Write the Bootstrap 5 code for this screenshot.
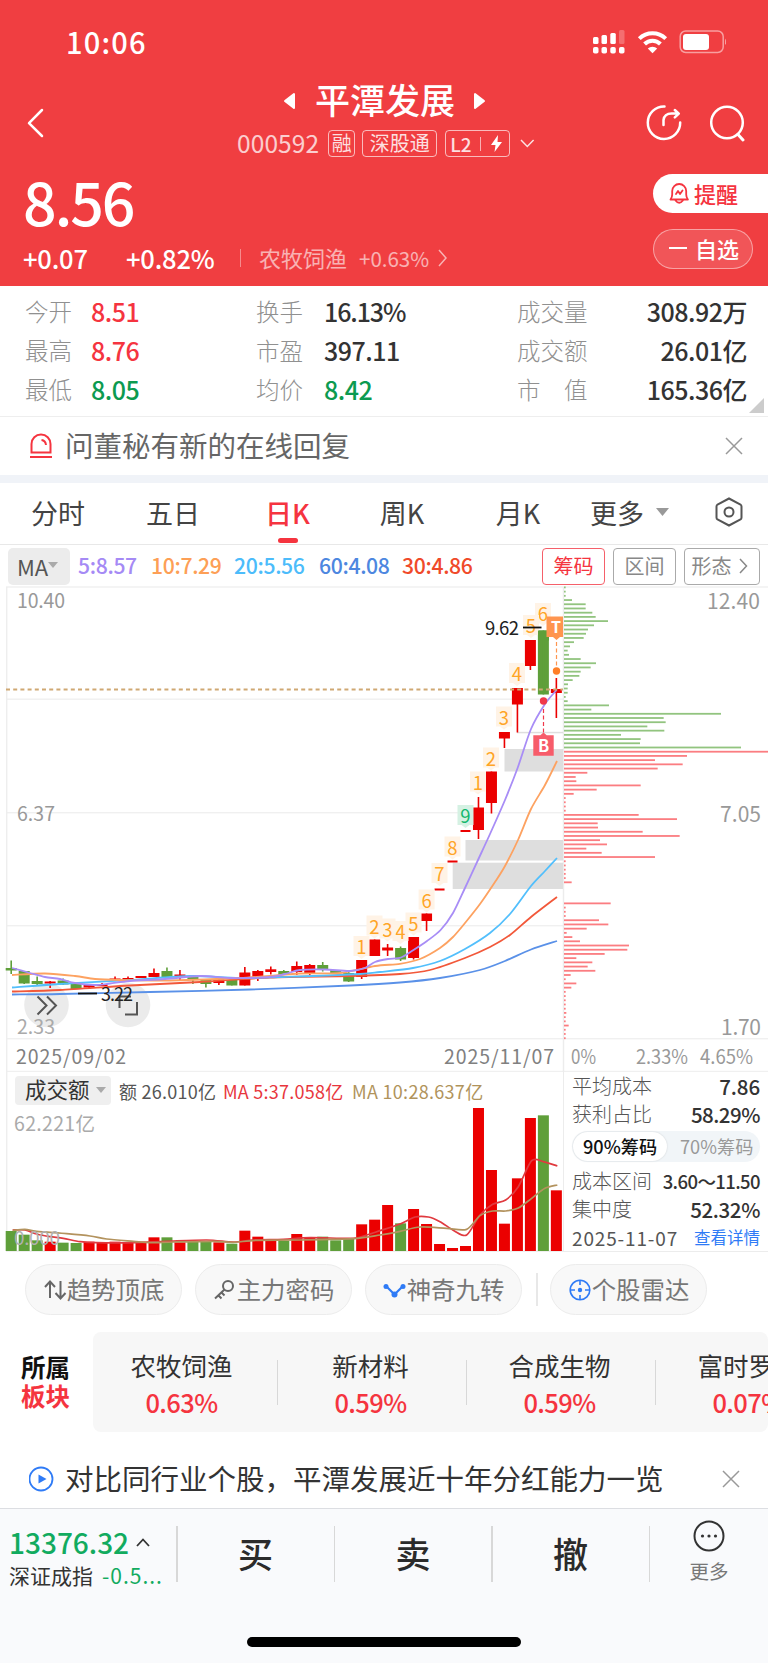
<!DOCTYPE html>
<html lang="zh-CN">
<head>
<meta charset="utf-8">
<meta name="viewport" content="width=device-width, initial-scale=1">
<title>平潭发展 000592</title>
<link href="https://cdn.jsdelivr.net/npm/bootstrap@5.3.0/dist/css/bootstrap.min.css" rel="stylesheet">
<style>
:root{--up:#f5343f;--down:#0c9a50;--head:#f03e41}
body{font-family:"Noto Sans CJK SC",sans-serif;width:768px;margin:0;background:#fff;color:#333;line-height:1;white-space:nowrap;overflow-x:hidden}
svg{display:block;flex:none}
.hd{background:var(--head);color:#fff;height:286px}
.status{height:84px;padding:0 42px 1px 66px}
.clock{font-size:29px;font-weight:500;letter-spacing:1.2px}
.titles{height:84px}
.side-l{width:237px;padding-left:26px;height:78px}
.stock-name{font-size:35px;font-weight:500;line-height:36px;margin:0 18px 0 19px;padding-bottom:3px}
.code{font-size:24.5px;opacity:.75;letter-spacing:.1px}
.tag{border:1.3px solid rgba(255,255,255,.65);border-radius:4px;height:27px;font-size:20px;line-height:24px;color:rgba(255,255,255,.85)}
.price{font-size:59px;font-weight:500;line-height:60px;letter-spacing:-2px}
.chg{font-size:25.5px;font-weight:500;letter-spacing:-.2px}
.pill-w{height:39px;border-radius:20px 0 0 20px;background:#fff;color:var(--up);width:115px;font-size:22px;font-weight:500;padding:0 0 2px 14px}
.pill-o{height:40px;border-radius:20px;border:1px solid rgba(255,255,255,.45);background:rgba(255,255,255,.12);width:100px;font-size:22px;font-weight:500;margin-right:15px;padding:0 0 2px 15px}
.facts{height:131px;padding:6px 21px 0 25px;border-bottom:1.5px solid #eee;position:relative}
.facts .line{height:39px}
.k{font-size:23.5px;color:#909090;font-weight:300}
.v{font-size:25px;font-weight:500;color:#333;letter-spacing:-.5px}
.up{color:var(--up)!important}.down{color:var(--down)!important}
.corner{position:absolute;right:4px;bottom:3px}
.msg{height:58px;padding:0 25px 0 29px;font-size:28.5px;color:#666}
.msg span{padding-bottom:2px}
.gapband{height:8px;background:#f0f3f8}
.tabs{height:62px;border-bottom:1.5px solid #e8e8e8;font-size:27px;color:#444}
.tabs>div{position:relative;height:61px;padding-bottom:3px}
.tabs .on::after{content:"";position:absolute;left:50%;margin-left:-10px;bottom:1px;width:20px;height:5px;border-radius:3px;background:var(--up)}
.ma{height:41px;padding:2px 8px 0;font-size:21.2px;font-weight:500}
.ma span{letter-spacing:-.35px;padding-bottom:3px}
.ma-btn{background:#ececec;width:62px;height:37px;border-radius:5px;color:#555;font-weight:400;padding:0 0 2px 9px;margin-right:8px;font-size:22px}
.opt{height:37px;border:1.5px solid #aaa;border-radius:4px;color:#888;font-size:20px;font-weight:400;width:63px;padding-bottom:2px}
.vol-btn{height:29px;width:96px;background:#efefef;border-radius:4px;font-size:21.5px;color:#333;padding:0 0 3px 10px}
.volhead{font-size:18px;padding:4px 0 0 15px;height:33px;color:#555}
.volbox{width:563px;height:180px;position:relative}
.volbox>svg{position:absolute;left:0;top:0}
.cost{width:205px;height:180px;border-left:1.5px solid #ececec;border-bottom:1.5px solid #ececec;padding:0 8px 0 8px;font-size:20px;color:#555;font-weight:300}
.cost b{font-size:20.5px;font-weight:500;color:#333;letter-spacing:-.1px}
.cost .ln{height:28px}
.toggle{height:31px;border-radius:16px;background:#f1f5f8;margin:3px 0 5px;font-size:18.2px;color:#999;font-weight:400}
.toggle .act{background:#fff;border-radius:16px;width:94px;height:29px;margin-left:1px;color:#111;font-weight:500;box-shadow:0 0 2px rgba(0,0,0,.15)}
.tools{padding:12px 0 0 25px;height:80px}
.tool{width:157px;height:51px;border:1.5px solid #ececec;border-radius:26px;background:#f8f8f8;color:#777;font-size:24.4px;margin-right:13px}
.sectors{height:100px}
.slabel{width:93px;padding:0 0 1px 21px;font-size:24.5px;font-weight:700;line-height:28.5px;color:#111}
.sbox{background:#f7f7f7;border-radius:8px;height:100px;width:675px;overflow:hidden}
.cell{width:189px;height:100px;flex:none;position:relative;padding-top:2px;font-size:25.5px;color:#333}
.cell::after{content:"";position:absolute;right:0;top:28px;height:45px;width:1.5px;background:#d8d8d8}
.cell .up{font-size:25.5px;font-weight:500;margin-top:12px;letter-spacing:-.6px}
.foot{border-top:1.5px solid #dcdee2;background:#f9fafc;height:155px;position:relative}
.foot .sep{width:1.5px;height:56px;background:#d8d8d8;flex:none}
.act-b{font-size:35px;font-weight:500;color:#2b2b2b;padding-bottom:13px;height:66px}
.home{position:absolute;left:247px;bottom:16px;width:274px;height:10px;border-radius:5px;background:#000}
svg text{font-family:"Noto Sans CJK SC",sans-serif}
</style>
</head>
<body>
<header class="hd">
  <div class="status d-flex align-items-center">
    <span class="clock me-auto">10:06</span>
    <svg width="134" height="26" viewBox="592 29 134 26" fill="#fff">
      <rect x="593" y="37" width="5.5" height="7" rx="1.5"/><rect x="601.5" y="35" width="5.5" height="9" rx="1.5"/><rect x="610.3" y="33" width="5.5" height="11" rx="1.5"/><rect x="619" y="30" width="5.5" height="14" rx="1.5" opacity=".25"/>
      <rect x="593" y="47" width="5.5" height="6.5" rx="1.8"/><rect x="601.5" y="47" width="5.5" height="6.5" rx="1.8"/><rect x="610.3" y="47" width="5.5" height="6.5" rx="1.8"/><rect x="619" y="47" width="5.5" height="6.5" rx="1.8"/>
      <g fill="none" stroke="#fff" stroke-width="4"><path d="M639.3 38.6a19 19 0 0 1 26.4 0"/><path d="M644.6 44a11.3 11.3 0 0 1 15.8 0"/></g><path d="M647.8 48.6a6.6 6.6 0 0 1 9.4 0l-4.7 4.7z"/>
      <rect x="680.2" y="31" width="43" height="21.5" rx="5.5" fill="none" stroke="#fff" stroke-width="1.5" opacity=".5"/><rect x="683" y="34" width="26" height="16" rx="3"/><path d="M725 38.500v6.500q2.500-3.200 0-6.500z" opacity=".5"/>
    </svg>
  </div>
  <div class="titles d-flex">
    <div class="side-l d-flex align-items-center"><svg width="18" height="30" viewBox="0 0 18 30" fill="none" stroke="#fff" stroke-width="2.500" stroke-linecap="round" stroke-linejoin="round"><path d="M16 2 3 15.200 16 28"/></svg></div>
    <div style="width:300px">
      <div class="d-flex align-items-center" style="padding-left:46px;height:33px">
        <svg width="13" height="18"><path d="M11 2v14L2 9z" fill="#fff" stroke="#fff" stroke-width="2" stroke-linejoin="round"/></svg>
        <span class="stock-name">平潭发展</span>
        <svg width="13" height="18"><path d="M2 2v14l9-7z" fill="#fff" stroke="#fff" stroke-width="2" stroke-linejoin="round"/></svg>
      </div>
      <div class="d-flex align-items-center" style="height:29px;margin-top:12px">
        <span class="code">000592</span><span class="tag text-center" style="width:27px;margin-left:9px">融</span><span class="tag text-center" style="width:75px;margin-left:7px">深股通</span>
        <span class="tag d-flex align-items-center" style="width:65px;margin-left:8px;padding-left:4px;font-weight:500;font-size:19px">L2<i style="width:1px;height:14px;background:#fff;opacity:.6;margin:0 9px 0 8px"></i><svg width="13" height="17" fill="#fff"><path d="M8 0 1 10h4.500L4.500 17 12 7H7.500z"/></svg></span>
        <svg class="ms-2" width="18" height="12" viewBox="0 0 18 12" fill="none" stroke="#fff" stroke-width="1.500" opacity=".85"><path d="m3 2 6.300 6.500L15.600 2"/></svg>
      </div>
    </div>
    <div class="ms-auto d-flex align-items-center" style="height:77px;padding-right:23px">
      <svg width="100" height="40" viewBox="645 103 100 40" fill="none" stroke="#fff" stroke-width="2.500" stroke-linecap="round" stroke-linejoin="round"><path d="M664.500 106.500a16.200 16.200 0 1 0 15.700 16"/><path d="M663.500 125v-5q1-6.500 8-6.500h7M674.800 110l4 3.700-4 3.700"/><circle cx="727" cy="122.500" r="15.800"/><path d="m738 134.500 5 5.500" stroke-width="3"/></svg>
    </div>
  </div>
  <div class="d-flex justify-content-between">
    <div style="padding-left:23px">
      <div class="price" style="padding-top:3px">8.56</div>
      <div class="d-flex align-items-center" style="height:30px;margin-top:12px">
        <span class="chg" style="width:103px">+0.07</span><span class="chg" style="width:114px">+0.82%</span>
        <i style="width:1px;height:18px;background:#fff;opacity:.4;margin-right:18px"></i>
        <span style="opacity:.6;font-size:22px;padding-bottom:2px">农牧饲渔</span><span style="opacity:.6;font-size:20.5px;margin-left:12px">+0.63%</span>
        <svg width="14" height="20" style="margin-left:6px" fill="none" stroke="#fff" stroke-width="1.500" opacity=".6"><path d="m4 2 7 8-7 8"/></svg>
      </div>
    </div>
    <div class="d-flex flex-column align-items-end" style="padding-top:6px">
      <div class="pill-w d-flex align-items-center"><svg width="24" height="24" viewBox="0 0 24 24" fill="none" stroke="#f5343f" stroke-width="1.800" stroke-linejoin="round" stroke-linecap="round" style="margin-right:3px"><path d="M3.500 18.500q1.700-2.200 1.700-5V10a7 7 0 0 1 14 0v3.500q0 2.800 1.700 5zM8.500 19.500q3.700 4.500 7.400 0M9 13l2-3 2 3 2.500-3.500"/></svg>提醒</div>
      <div class="pill-o d-flex align-items-center" style="margin-top:16px"><i style="width:18px;height:2px;background:#fff;margin-right:8px"></i>自选</div>
    </div>
  </div>
</header>

<section class="facts">
  <div class="line d-flex align-items-center"><span class="k" style="width:66px">今开</span><span class="v up" style="width:165px">8.51</span><span class="k" style="width:68px">换手</span><span class="v" style="letter-spacing:-1.100px">16.13%</span><span class="k ms-auto" style="width:90px">成交量</span><span class="v text-end" style="width:140px">308.92万</span></div>
  <div class="line d-flex align-items-center"><span class="k" style="width:66px">最高</span><span class="v up" style="width:165px">8.76</span><span class="k" style="width:68px">市盈</span><span class="v">397.11</span><span class="k ms-auto" style="width:90px">成交额</span><span class="v text-end" style="width:140px">26.01亿</span></div>
  <div class="line d-flex align-items-center"><span class="k" style="width:66px">最低</span><span class="v down" style="width:165px">8.05</span><span class="k" style="width:68px">均价</span><span class="v down">8.42</span><span class="k ms-auto" style="width:90px">市　值</span><span class="v text-end" style="width:140px">165.36亿</span></div>
  <svg class="corner" width="15" height="15"><path d="M15 0v15H0z" fill="#ccc"/></svg>
</section>

<div class="msg d-flex align-items-center">
  <svg width="24" height="26" fill="none" stroke="#f5343f" stroke-width="2" style="margin-right:12px"><path d="M2.500 19.500V11a9.500 9.500 0 0 1 19 0v8.500zM1 24h22M12.500 7q4 .5 4.500 5"/></svg><span>问董秘有新的在线回复</span>
  <svg class="ms-auto" width="18" height="18" stroke="#999" stroke-width="1.500"><path d="m1 1 16 16M17 1 1 17"/></svg>
</div>
<div class="gapband"></div>

<nav class="tabs d-flex">
  <div class="d-flex align-items-center justify-content-center" style="width:116px">分时</div>
  <div class="d-flex align-items-center justify-content-center" style="width:114px">五日</div>
  <div class="d-flex align-items-center justify-content-center on up" style="width:115px;font-weight:500">日K</div>
  <div class="d-flex align-items-center justify-content-center" style="width:114px">周K</div>
  <div class="d-flex align-items-center justify-content-center" style="width:118px">月K</div>
  <div class="d-flex align-items-center" style="width:138px;padding-left:13px">更多<svg style="margin-left:10px" width="16" height="10"><path d="M2 1h13L8.500 9z" fill="#999"/></svg></div>
  <div class="d-flex align-items-center"><svg width="28" height="30" viewBox="0 0 28 30" fill="none" stroke="#555" stroke-width="2"><path d="M14 1.500 25.500 7.500q1 .6 1 2v11q0 1.400-1 2L14 28.500 2.500 22.500q-1-.6-1-2v-11q0-1.400 1-2z"/><circle cx="14" cy="15" r="4.500"/></svg></div>
</nav>

<div class="ma d-flex align-items-center">
  <div class="ma-btn d-flex align-items-center">MA<svg width="10" height="7" class="ms-0"><path d="M0 0h10L5 6z" fill="#aaa"/></svg></div>
  <span style="color:#a58af5;width:73px">5:8.57</span><span style="color:#fd9f56;width:83px">10:7.29</span><span style="color:#4cbcfb;width:85px">20:5.56</span><span style="color:#4d87e0;width:83px">60:4.08</span><span style="color:#f04a2a">30:4.86</span>
  <div class="ms-auto d-flex gap-2">
    <div class="opt d-flex align-items-center justify-content-center up" style="border-color:#f5606a">筹码</div>
    <div class="opt d-flex align-items-center justify-content-center">区间</div>
    <div class="opt d-flex align-items-center justify-content-center" style="width:76px;padding-right:3px">形态<svg width="12" height="16" style="margin-left:6px" fill="none" stroke="#888" stroke-width="1.500"><path d="m2 1 6.500 7L2 15"/></svg></div>
  </div>
</div>

<svg id="kchart" width="768" height="486" viewBox="0 586 768 486"></svg>

<section class="d-flex">
  <div class="volbox">
    <svg id="vchart" width="563" height="180" viewBox="0 1072 563 180"></svg>
    <div class="volhead d-flex align-items-center position-relative">
      <div class="vol-btn d-flex align-items-center">成交额<svg width="10" height="7" style="margin-left:6px;margin-top:3px"><path d="M0 0h10L5 6z" fill="#aaa"/></svg></div>
      <span style="margin-left:8px;width:104px;letter-spacing:.25px">额 26.010亿</span><span style="width:129px;color:#e8363d;letter-spacing:.25px">MA 5:37.058亿</span><span style="color:#b0935b;letter-spacing:.3px">MA 10:28.637亿</span>
    </div>
  </div>
  <div class="cost">
    <div class="ln d-flex align-items-center justify-content-between">平均成本<b>7.86</b></div>
    <div class="ln d-flex align-items-center justify-content-between">获利占比<b style="letter-spacing:-.500px">58.29%</b></div>
    <div class="toggle d-flex align-items-center"><div class="act d-flex align-items-center justify-content-center">90%筹码</div><span style="margin-left:13px">70%筹码</span></div>
    <div class="ln d-flex align-items-center justify-content-between">成本区间<b style="font-size:18.500px;letter-spacing:-.600px">3.60～11.50</b></div>
    <div class="ln d-flex align-items-center justify-content-between">集中度<b style="letter-spacing:-.400px">52.32%</b></div>
    <div class="ln d-flex align-items-center justify-content-between" style="font-weight:400;font-size:19px;letter-spacing:.850px">2025-11-07<span style="font-size:16.500px;color:#2f7bf6;letter-spacing:0">查看详情</span></div>
  </div>
</section>

<div class="tools d-flex">
  <div class="tool d-flex align-items-center justify-content-center"><svg width="24" height="26" fill="none" stroke="#666" stroke-width="2"><path d="M7 21V5M2 10l5-5.500 5 5.500M17.500 4v17M12.500 16l5 5.500 5-5.500"/></svg>趋势顶底</div>
  <div class="tool d-flex align-items-center justify-content-center"><svg width="24" height="26" fill="none" stroke="#666" stroke-width="2"><circle cx="15" cy="9" r="5"/><path d="M11.500 12.500 2 21.500M5.500 18.500l3 3M8.500 15.500l3 3"/></svg>主力密码</div>
  <div class="tool d-flex align-items-center justify-content-center"><svg width="24" height="26" fill="none" stroke="#2f7bf6" stroke-width="2.200"><path d="m3 9 8.500 8.500L20 9"/><g fill="#2f7bf6" stroke="none"><circle cx="3" cy="9.500" r="2.500"/><circle cx="11.500" cy="17.500" r="3"/><circle cx="20" cy="9.500" r="2.500"/></g></svg>神奇九转</div>
  <i style="width:1.500px;height:33px;background:#e8e8e8;margin:9px 12.500px 0 1px"></i>
  <div class="tool d-flex align-items-center justify-content-center"><svg width="24" height="26" viewBox="0 0 24 26" fill="none" stroke="#2f7bf6" stroke-width="1.600"><circle cx="12" cy="13" r="9.800"/><path d="M12 3v5M12 18v5M2 13h5M17 13h5"/><circle cx="12" cy="13" r="2.200" fill="#2f7bf6" stroke="none"/></svg>个股雷达</div>
</div>

<section class="sectors d-flex align-items-center">
  <div class="slabel">所属<br><span class="up">板块</span></div>
  <div class="sbox d-flex">
    <div class="cell d-flex flex-column align-items-center justify-content-center" style="width:185px;padding-right:8px">农牧饲渔<span class="up">0.63%</span></div>
    <div class="cell d-flex flex-column align-items-center justify-content-center pe-1">新材料<span class="up">0.59%</span></div>
    <div class="cell d-flex flex-column align-items-center justify-content-center pe-1">合成生物<span class="up">0.59%</span></div>
    <div class="cell d-flex flex-column align-items-center justify-content-center pe-1">富时罗素<span class="up">0.07%</span></div>
  </div>
</section>

<div class="msg d-flex align-items-center" style="height:76px;padding-top:18px;color:#333;padding-right:28px">
  <svg width="25" height="26" fill="none" stroke="#2f7bf6" stroke-width="1.800" style="margin-right:11px"><circle cx="12" cy="13" r="11.500"/><path d="M9.500 8.500v9l8-4.500z" fill="#2f7bf6" stroke="none"/></svg><span>对比同行业个股，平潭发展近十年分红能力一览</span>
  <svg class="ms-auto" width="18" height="18" stroke="#999" stroke-width="1.500"><path d="m1 1 16 16M17 1 1 17"/></svg>
</div>

<footer class="foot">
  <div class="d-flex" style="padding-top:17px">
    <div style="width:176px;padding-left:9px">
      <div class="d-flex align-items-center" style="height:32px;font-size:28px;font-weight:500;color:#12ab5f">13376.32<svg width="14" height="9" style="margin-left:7px" fill="none" stroke="#333" stroke-width="1.800"><path d="m1 8 6-6.500L13 8"/></svg></div>
      <div class="d-flex align-items-center" style="height:34px;font-size:21px">深证成指<span style="margin-left:9px;color:#12ab5f;letter-spacing:1px">-0.5...</span></div>
    </div>
    <i class="sep"></i>
    <div class="act-b d-flex align-items-center justify-content-center" style="width:156px">买</div><i class="sep"></i>
    <div class="act-b d-flex align-items-center justify-content-center" style="width:156px">卖</div><i class="sep"></i>
    <div class="act-b d-flex align-items-center justify-content-center" style="width:156px">撤</div><i class="sep"></i>
    <div class="d-flex flex-column align-items-center" style="width:118px;margin-top:-7px;font-size:19.500px;color:#777">
      <svg width="34" height="34" fill="none" stroke="#333" stroke-width="2"><circle cx="17" cy="17" r="14.500"/><g fill="#333" stroke="none"><circle cx="10.500" cy="17" r="1.600"/><circle cx="17" cy="17" r="1.600"/><circle cx="23.500" cy="17" r="1.600"/></g></svg>
      <span style="margin-top:8px">更多</span>
    </div>
  </div>
  <div class="home"></div>
</footer>

<script>
const R='#eb0000', G='#5f9f3a', X0=11.2, DX=12.98;
// [colour, body top, body bottom, wick top, wick bottom]
const K=[['g',968,970.5,960.5,974],['g',971,983.5,971,984],['g',981,984,976.5,986],['r',981.5,983.5,981,988],['g',980.5,984.5,978.5,985],['g',983.5,989,983,989],['r',984.5,987.5,984,989],['r',984,986,983,986],['r',978.5,980,976.5,980],['r',978,980,976.5,980],['r',976,978,976,978],['r',973,977,968.5,977],['g',971,977,967.5,979],['r',974.5,976,970,981],['g',977,979.5,977,984],['g',979,984,979,987.5],['r',979.5,983,979,985],['g',980,985.5,980,985.5],['r',972.5,985.5,967,985.5],['r',971,977,970,981],['r',969.3,972,966.5,974.5],['g',971,975,970,975],['r',966,972,961.5,975],['r',965,973.5,964,975],['g',965,970,962,971.5],['g',970,973,970,973],['g',973,981.5,972,982],['r',960,977,960,979],['r',939.5,956,939.5,956],['r',947.5,950.5,944,956],['g',948,959.5,946.5,961],['r',937,958,937,959.5],['r',913.5,921,913.5,931],['l',889.5],['l',861.5],['l',831],['r',807.5,830,797,839],['r',771.5,803,771.5,813.5],['r',732,738.5,732,748],['r',688,704.5,688,732.5],['r',640,666,640,670],['g',630.5,694.5,630.5,694.5],['r',689,693,678,718]];
const line=(p,c,w)=>{let d='M'+p[0];for(let i=0;i<p.length-1;i++){const a=p[i-1]||p[i],b=p[i],e=p[i+1],f=p[i+2]||e;d+=`C${b[0]+(e[0]-a[0])/7} ${b[1]+(e[1]-a[1])/7} ${e[0]-(f[0]-b[0])/7} ${e[1]-(f[1]-b[1])/7} ${e}`}return `<path d="${d}" fill="none" stroke="${c}" stroke-width="${w}"/>`};
const rect=(x,y,w,h,f)=>`<rect x="${x}" y="${y}" width="${w}" height="${h}" fill="${f}"/>`;
const txt=(s,x,y,len,size,c,a='')=>`<text x="${x}" y="${y}" font-size="${size}" fill="${c}" textLength="${len}" ${a}>${s}</text>`;
let s='';
for(const y of [587,699.2,812.7,925.7,1038.7,1071.5]) s+=rect(6,y-.7,y==587||y>1000?762:557,1.4,'#f0f0f0');
s+=rect(6,587,1.4,485,'#eee')+rect(562.8,587,1.4,485,'#ececec');
s+=rect(504.5,749,58.5,22.5,'#dedede')+rect(465.5,840,97.5,20.5,'#dedede')+rect(452.7,862.7,110.300,26.300,'#dedede')+rect(517,731.8,46,1.500,'#dedede');
s+=txt('10.40',17,608,48,19.500,'#999')+txt('6.37',17,821,38,19.500,'#999')+txt('12.40',707,608.800,53,21,'#999')+txt('7.05',720,821.800,41,21,'#999')+txt('1.70',721,1035,40,21,'#999');
s+='<g fill="#ebebeb"><circle cx="46.500" cy="1005" r="22.300"/><circle cx="128" cy="1005" r="22.300"/></g>'+txt('2.33',17,1034,38,19.500,'#aaa');
s+='<g fill="none" stroke="#555" stroke-width="2"><path d="m37.500 996.500 9 9-9 9M47 996.500l9 9-9 9M119.500 1008v-11.500H131M125 1014.500h12v-12.500"/></g>';
K.forEach((k,i)=>{const x=X0+DX*i;if(k[0]=='l'){s+=rect(x-5,k[1]-1,10,2,R);return}const c=k[0]=='r'?R:G;s+=rect(x-5.5,k[1],11,k[2]-k[1],c)+rect(x-.8,k[3],1.6,k[4]-k[3],c)});
[['6',42,543,614],['5',0,531,626],['4',0,517,674],['3',0,504,717.500],['2',0,491,758.500],['1',0,478,782.500],['9',1,465.500,816],['8',0,452.500,847.500],['7',0,439.500,874],['6',0,426.600,900.500],['5',0,413.500,923.500],['4',0,400.500,932],['3',0,387.500,929.500],['2',0,374.500,926.500],['1',0,361.500,947]].forEach(([t,g,x,y])=>{const q=g===1;s+=rect(x-8,y-11,16,20,q?'#d5f1e3':'#fff3e6')+`<path d="M${x-4} ${y+9}h8l-4 3z" fill="${q?'#d5f1e3':'#fff3e6'}"/><text x="${x}" y="${y+7}" font-size="18.500" text-anchor="middle" fill="${q?'#13b76c':'#ffa526'}">${t}</text>`});
s+=rect(538,630.500,11,10,G);
s+=line([[12,994.5],[60,994],[150,992],[250,989.5],[350,985.5],[400,982.5],[440,978],[480,970],[505,961],[531,949.5],[557,941]],'#5a91e8',1.8);
s+=line([[12,991.5],[60,990],[130,985.5],[200,982],[270,977.5],[350,976],[400,974],[430,970],[465,958],[490,947],[510,935],[531,917],[557,897]],'#f2583a',1.8);
s+=line([[12,987.5],[60,984],[130,980],[190,976],[240,978],[300,976.5],[360,974],[380,972],[413,968],[440,961],[465,949],[490,933],[510,914],[531,886],[545,871],[557,858]],'#52bffc',1.8);
s+=line([[12,975],[45,973.5],[75,976],[95,979],[120,980],[170,980.5],[240,978],[300,973.5],[340,973],[375,966],[400,963.8],[420,959],[440,948],[453,937],[465,923],[480,904],[495,882],[505,866],[518,840],[531,809],[545,785],[557,761]],'#fda261',1.8);
s+=line([[12,968],[30,973],[45,977],[60,979],[75,983],[95,985],[110,983.5],[130,981],[165,979],[200,976],[230,978],[270,977],[285,974],[300,970],[325,969.5],[350,971],[365,968],[375,962],[388,959],[401,957.5],[413.5,950],[427,941],[440.6,930],[453,913],[465,888],[478,860],[490,834],[505,800],[517.6,768],[531,729],[545,704],[556.6,690]],'#a88df6',1.8);
s+='<path d="M6 689.500H563" stroke="#cfa873" stroke-width="1.800" stroke-dasharray="4 3.200"/>';
s+=txt('9.62',485,635,34,18.500,'#222')+rect(523,626.600,18.500,1.800,'#111')+txt('3.22',101,1001,32,18,'#222')+rect(78,992.600,19,1.800,'#111');
s+='<path d="M546.500 616.500H563V637h-3l-3.500 3-3.500-3h-6.500z" fill="#ff954f"/><text x="556" y="632.500" font-size="16" font-weight="700" fill="#fff" text-anchor="middle">T</text><path d="M556.500 642v24" stroke="#ff954f" stroke-width="1.200" stroke-dasharray="4 2.500"/><circle cx="556.500" cy="671" r="3.700" fill="#ff7f27"/>';
s+='<circle cx="543.500" cy="701" r="3.700" fill="#f0384a"/><path d="M543.500 709v24" stroke="#f0384a" stroke-width="1.200" stroke-dasharray="4 2.500"/><path d="M533.300 735.300h7l3.200-2.800 3.200 2.800h7v20.500h-20.400z" fill="#f75c6a"/><text x="543.500" y="751.500" font-size="16.500" font-weight="700" fill="#fff" text-anchor="middle">B</text>';
s+=txt('2025/09/02',16,1063.500,110,19.500,'#808080')+txt('2025/11/07',444,1063.500,110,19.500,'#808080')+txt('0%',571,1063.500,25,19.500,'#999','lengthAdjust="spacingAndGlyphs"')+txt('2.33%',636,1063.500,52,19.500,'#999','lengthAdjust="spacingAndGlyphs"')+txt('4.65%',700,1063.500,53,19.500,'#999','lengthAdjust="spacingAndGlyphs"');
// chip distribution: bar lengths in thirds of a pixel
const C=[5,5,5,24,65,65,85,95,132,90,72,66,59,30,18,11,15,50,96,80,50,46,26,12,11,11,5,11,135,82,471,299,305,250,301,171,230,228,531,612,369,273,356,281,70,35,37,230,98,29,5,5,5,5,224,339,101,102,236,347,108,129,67,113,273,5,5,5,5,5,23,0,0,0,0,140,5,5,5,105,133,68,8,25,48,195,190,122,37,85,71,94,20,5,37,22,5,5,5,5,5,7,5,5,14,5,5,5];
C.forEach((w,i)=>{if(w)s+=rect(564,586.5+i*4.213,w/3,1.8,i<39?'#92c47f':'#fb7d81')});
document.getElementById('kchart').innerHTML=s;

const V=[513,524,541,545,548,549,545,549,545,548,549,532,532,547,545,543,547,551,512,530,541,543,522,531,530,541,536,493,479,435,490,447,492,552,564,558,144,330,491,355,174,166,391],VC='gggrggrrrrrrgrggrgrrrgrrgggrrrgrrrrrrrrrrgr';
s=rect(6,1072,1.4,179,'#eee')+rect(6,1250.4,557,1.4,'#ececec');
V.forEach((v,i)=>{s+=rect(X0+DX*i-5.5,1060+v/3,11,(573-v)/3,VC[i]=='r'?R:G)});
const P=(a,b)=>[...a.map(p=>[p[0]/3,1060+p[1]/3]),...b.map(p=>[380+p[0]/3,1060+p[1]/3])];
s+=line(P([[38,510],[75,510],[110,522],[150,530],[190,535],[240,545],[290,548],[400,548],[500,544],[620,540],[700,546],[760,540],[850,538],[930,533],[1060,535],[1100,525]],[[0,512],[60,492],[105,471],[145,471],[180,485],[222,512],[260,525],[300,465],[338,433],[377,420],[415,380],[455,302],[490,305],[532,318]]),'#e03a3f',1.7);
s+=line(P([[38,511],[75,508],[110,514],[200,521],[270,528],[320,537],[400,544],[450,548],[520,546],[640,544],[700,547],[770,541],[900,540],[1060,536]],[[0,525],[60,514],[120,501],[200,505],[260,508],[300,467],[338,453],[377,453],[415,444],[455,415],[495,385],[532,375]]),'#b3935e',1.7);
s+=txt('62.221亿',14,1130.500,81,19.500,'#aaa')+txt('0.000',14,1244.500,46,19,'#b0b0b0');
document.getElementById('vchart').innerHTML=s;
</script>
<script src="https://cdn.jsdelivr.net/npm/bootstrap@5.3.0/dist/js/bootstrap.bundle.min.js"></script>
</body>
</html>
